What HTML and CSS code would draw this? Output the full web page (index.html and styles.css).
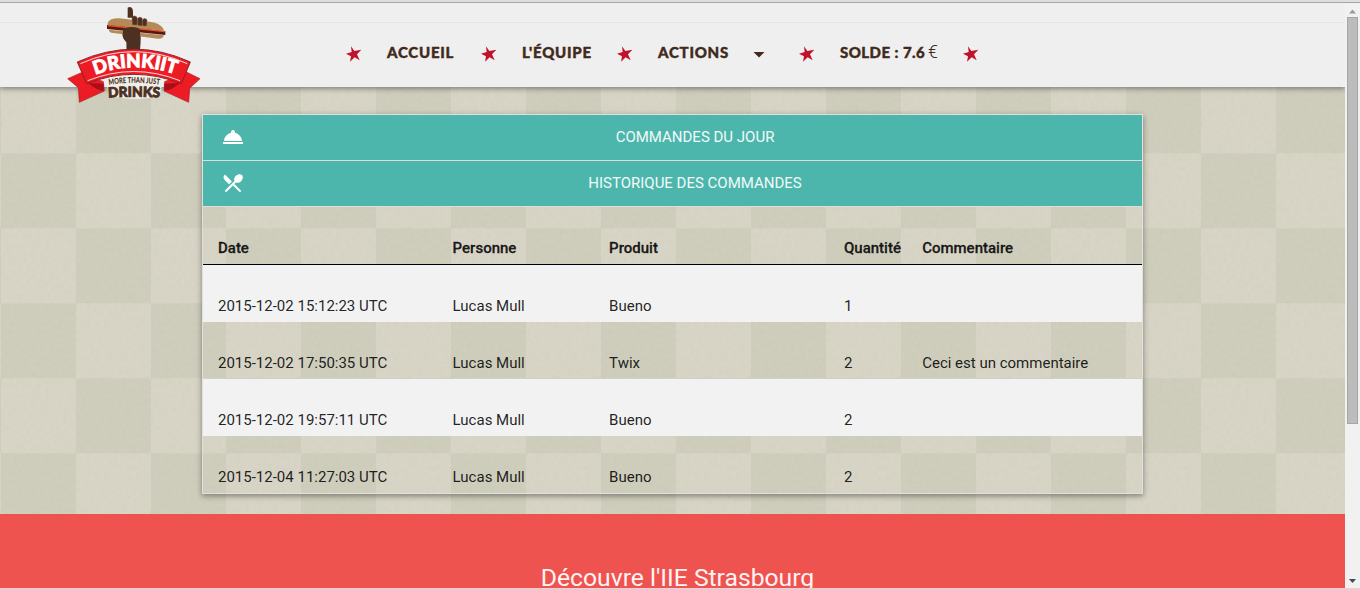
FILE: index.html
```html
<!DOCTYPE html>
<html lang="fr">
<head>
<meta charset="utf-8">
<title>Drinkiit</title>
<link rel="stylesheet" href="styles.css">
</head>
<body>
<svg class="defs" width="0" height="0"><symbol id="star" viewBox="0 0 48 48"><path d="M15 1 25 15 46 11 33 25 41 43 26 34 12 47 15 31 0 23 17 18Z"/></symbol></svg>
<div class="window-edge"></div>
<div class="viewport">
  <div class="page">
    <header class="header">
      <svg class="logo" viewBox="0 0 510 345">
        <path d="M233 23q6-4 12 0 4 3 4 12v18h-16zM231 85h31q12 12 10 32 0 14-2 32h-40V128q-14-14-12-28 2-10 13-15z" fill="#4d3021"/>
        <path d="M173 70q4-16 35-15l95 11q25 4 35 17l5 9-171-15z" fill="#b48b58"/>
        <path d="m177 89 165 17q-3 12-18 10L190 99q-14-2-13-10z" fill="#b48b58"/>
        <path d="m171 75 175 19v11L171 87z" fill="#5a1712"/><path d="m174 74 170 19v4L174 79z" fill="#e65324"/>
        <path d="M246 54q1-7 8-6t8 7l-1 20-13-1zM263 57q1-6 8-5t6 7l-1 18-12-1zM278 60q2-5 8-4t5 6l-2 16-11-1z" fill="#4d3021" stroke="#795036" stroke-width="1.5"/>
        <path d="M220 86q22-9 46-1 6 9 4 29l-1 32h-39V124q-13-8-12-22z" fill="#4d3021"/>
        <path d="m94 218-41 18 32 27 3 44 75-34-3-28z" fill="#ed1c24" stroke="#a91d22" stroke-width="2"/>
        <path d="m409 216 41 20-31 29-3 42-74-34 2-28z" fill="#ed1c24" stroke="#a91d22" stroke-width="2"/>
        <path d="m115 249 46 2v22q-22-2-46-24zM389 249l-46 2v22q22-2 46-24z" fill="#a80f18"/>
        <path d="M168 239q84-17 170 0l-8 48q-72 20-154 0z" fill="#efeee8"/>
        <path d="M82 186q170-77 339 0l-27 65q-142-56-284 0z" fill="#ed1c24" stroke="#8e2023" stroke-width="3"/>
        <path d="M91 191q161-72 321 0M113 242q138-55 277 0" fill="none" stroke="#fff" stroke-width="2.5"/>
        <path id="arc-a" d="M136 225q115-46 247 0" fill="none"/>
        <path id="arc-b" d="M177 255q76-13 155 0" fill="none"/>
        <path id="arc-c" d="M175 293q76-6 160 0" fill="none"/>
        <text class="logo-name"><textPath href="#arc-a" textLength="246" lengthAdjust="spacingAndGlyphs">DRINKIIT</textPath></text>
        <text class="logo-line"><textPath href="#arc-b" textLength="152" lengthAdjust="spacingAndGlyphs">MORE THAN JUST</textPath></text>
        <text class="logo-drinks"><textPath href="#arc-c" textLength="155" lengthAdjust="spacingAndGlyphs">DRINKS</textPath></text>
      </svg>
      <nav class="nav">
        <svg class="star"><use href="#star"/></svg>
        <a class="link accueil">ACCUEIL</a>
        <svg class="star"><use href="#star"/></svg>
        <a class="link equipe">L'ÉQUIPE</a>
        <svg class="star"><use href="#star"/></svg>
        <a class="link actions">ACTIONS <span class="caret"></span></a>
        <svg class="star"><use href="#star"/></svg>
        <a class="link solde">SOLDE : 7.6 <span class="euro">€</span></a>
        <svg class="star"><use href="#star"/></svg>
      </nav>
    </header>
    <main class="main">
      <section class="card">
        <div class="bar">
          <svg class="bar-icon" viewBox="0 0 24 24"><path d="M2 17h20v2H2zm11.84-9.21A2.006 2.006 0 0 0 12 5a2.006 2.006 0 0 0-1.84 2.79C6.25 8.6 3.27 11.93 3 16h18c-.27-4.07-3.25-7.4-7.16-8.21z"/></svg>
          <span class="bar-title">COMMANDES DU JOUR</span>
        </div>
        <div class="bar">
          <svg class="bar-icon" viewBox="0 0 24 24"><path d="m8.1 13.34 2.83-2.83L3.91 3.5a4.008 4.008 0 0 0 0 5.66l4.19 4.18zm6.78-1.81c1.53.71 3.68.21 5.27-1.38 1.91-1.91 2.28-4.65.81-6.12-1.46-1.46-4.2-1.1-6.12.81-1.59 1.59-2.09 3.74-1.38 5.27L3.7 19.87l1.41 1.41L12 14.41l6.88 6.88 1.41-1.41L13.41 13l1.47-1.47z"/></svg>
          <span class="bar-title">HISTORIQUE DES COMMANDES</span>
        </div>
        <div class="row head"><span>Date</span><span>Personne</span><span>Produit</span><span>Quantité</span><span>Commentaire</span></div>
        <div class="row odd"><span>2015-12-02 15:12:23 UTC</span><span>Lucas Mull</span><span>Bueno</span><span>1</span><span></span></div>
        <div class="row"><span>2015-12-02 17:50:35 UTC</span><span>Lucas Mull</span><span>Twix</span><span>2</span><span>Ceci est un commentaire</span></div>
        <div class="row odd"><span>2015-12-02 19:57:11 UTC</span><span>Lucas Mull</span><span>Bueno</span><span>2</span><span></span></div>
        <div class="row"><span>2015-12-04 11:27:03 UTC</span><span>Lucas Mull</span><span>Bueno</span><span>2</span><span></span></div>
      </section>
    </main>
    <footer class="footer"><h2 class="footer-title">Découvre l'IIE Strasbourg</h2></footer>
  </div>
  <div class="scrollbar">
    <svg class="arrow" viewBox="0 0 15 14"><path d="M4 10.500h7L7.500 6.500z" fill="#999"/></svg>
    <div class="thumb"></div>
    <svg class="arrow down" viewBox="0 0 15 14"><path d="M4 5h7L7.500 9z" fill="#444a4d"/></svg>
  </div>
</div>
<div class="window-foot"></div>
</body>
</html>
```
FILE: styles.css
```css
* { box-sizing: border-box; }
body { margin: 0; height: 589px; overflow: hidden; font: 15px/22px Roboto, sans-serif; color: rgba(0,0,0,.87); background: #efefef; display: flex; flex-direction: column; }
.defs { display: block; flex: none; }
.window-edge { height: 3px; flex: none; background: #dedede; border-bottom: 1px solid #a5a5a5; }
.viewport { height: 585px; display: flex; }
.window-foot { height: 1px; background: #d8d8d8; }
.page {
  width: 1345px; display: flex; flex-direction: column; overflow: hidden;
  background:
    url("data:image/svg+xml,%3Csvg xmlns='http://www.w3.org/2000/svg' width='150' height='150'%3E%3Cfilter id='n' x='0' y='0' width='100%25' height='100%25'%3E%3CfeTurbulence type='fractalNoise' baseFrequency='.22' numOctaves='3' stitchTiles='stitch'/%3E%3CfeColorMatrix values='0 0 0 0 .35 0 0 0 0 .38 0 0 0 0 .25 .14 0 0 0 -.045'/%3E%3C/filter%3E%3Crect width='150' height='150' filter='url(%23n)'/%3E%3C/svg%3E") 0 0 / 150px 150px,
    conic-gradient(#cfcebd 0 25%, #d8d5c7 0 50%, #cfcebd 0 75%, #d8d5c7 0) 1px 75.3px / 150px 150px;
}
.header { height: 84px; flex: none; display: flex; background: linear-gradient(#efefef 19px, #e3e3e3 19px 20px, #efefef 20px); box-shadow: 0 2px 5px rgba(0,0,0,.38); position: relative; }
.logo { width: 170px; height: 115px; margin: -3px 0 0 50px; flex: none; }
.logo text { font-family: Lato, sans-serif; font-weight: 900; }
.logo-name { font-size: 56px; fill: #fff; stroke: #fff; stroke-width: 2.500px; }
.logo-line { font-size: 24px; fill: #4d3021; }
.logo-drinks { font-size: 42px; fill: #4d3021; stroke: #4d3021; stroke-width: 2.500px; }
.nav { display: flex; align-items: center; gap: 25px; height: 64px; margin: 17px 0 0 126px; }
.star { width: 16px; height: 16px; flex: none; fill: #c1122b; margin-top: 3px; }
.link { font: 900 15px/20px Lato, sans-serif; color: #412a1c; -webkit-text-stroke: .4px #412a1c; white-space: nowrap; flex: none; display: flex; align-items: center; }
.accueil { width: 69px; letter-spacing: .75px; }
.equipe { width: 70px; letter-spacing: .75px; }
.actions { width: 116px; justify-content: space-between; padding-right: 9px; letter-spacing: .75px; }
.caret { width: 12px; height: 6px; margin: 5px 0 0; background: #412a1c; clip-path: polygon(0 0, 100% 0, 50% 100%); }
.solde { width: 98px; justify-content: space-between; letter-spacing: .45px; }
.euro { font: 300 18px/20px Roboto, sans-serif; letter-spacing: 0; -webkit-text-stroke: 0; }
.main { height: 427px; flex: none; padding: 27px 202px 0; }
.card { width: 941px; height: 380px; border: 1px solid #e0e0dc; box-shadow: 0 2px 5px rgba(0,0,0,.3), 0 2px 8px rgba(0,0,0,.12); }
.bar { height: 46px; background: #4db6ac; border-bottom: 1px solid #ddd; display: flex; align-items: center; padding: 0 15px 2px 18px; }
.bar-icon { width: 24px; height: 24px; fill: #fff; flex: none; }
.bar-title { flex: 1; margin-left: 18px; color: #f1faf9; text-align: center; }
.row { height: 57px; display: grid; grid-template-columns: 234.6px 156.500px 234.900px 78.200px 1fr; padding: 30px 0 0 15px; }
.head { height: 58px; border-bottom: 1px solid #000; font-weight: 500; -webkit-text-stroke: .3px; }
.odd { background: #f2f2f2; }
.footer { height: 74px; flex: none; background: #ef5350; overflow: hidden; }
.footer-title { margin: 47px 0 0 10px; font-size: 24.700px; line-height: 34px; font-weight: 400; color: #fff4f3; text-align: center; }
.scrollbar { width: 15px; display: flex; flex-direction: column; background: #f1f1f1; }
.arrow { width: 15px; height: 14px; }
.thumb { width: 11px; height: 407px; margin-left: 2px; background: #bcbcbc; border: 1px solid #a5a5a5; }
.down { margin-top: auto; }
```
